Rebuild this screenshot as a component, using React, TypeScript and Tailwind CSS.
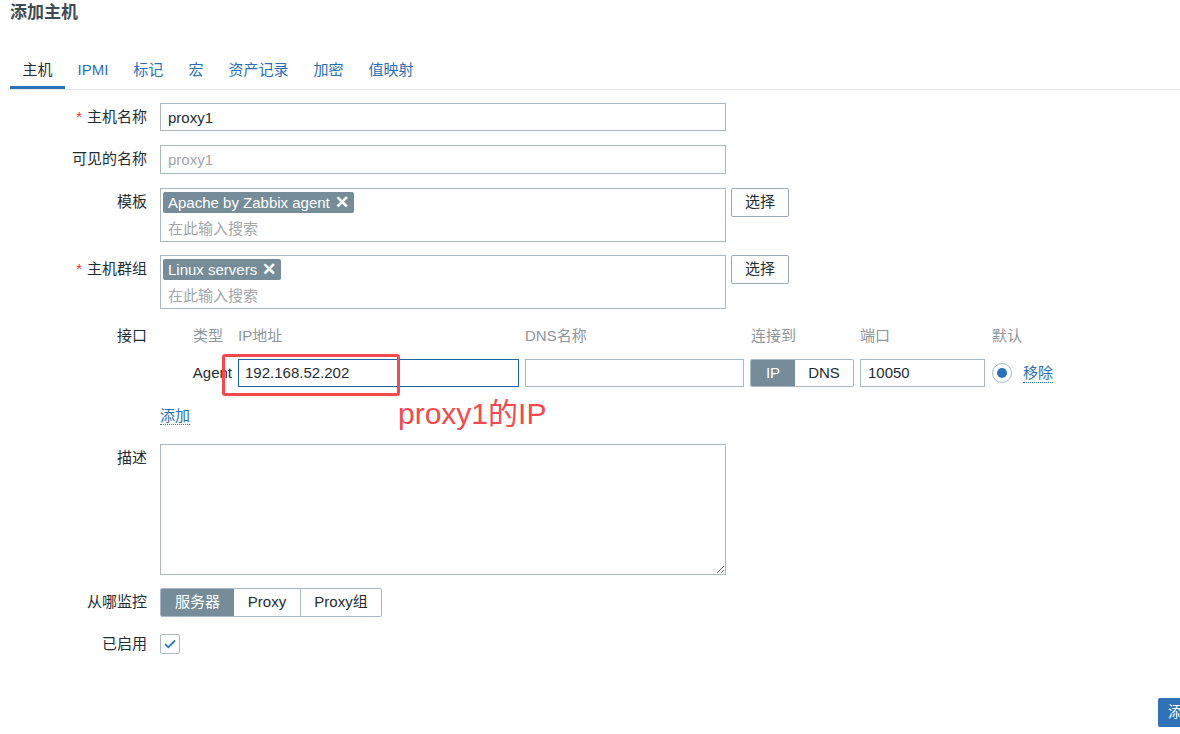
import React from "react";

const font = { fontFamily: '"Liberation Sans", "Noto Sans CJK SC", sans-serif' };

const tabs = ["主机", "IPMI", "标记", "宏", "资产记录", "加密", "值映射"];

function Label({ text, required }: { text: string; required?: boolean }) {
  return (
    <div className="w-[147px] shrink-0 pr-0 text-right leading-[28px] text-[#1f2c33]">
      {required && <span className="mr-[5px] text-[#e33734]">*</span>}
      {text}
    </div>
  );
}

function Tag({ text }: { text: string }) {
  return (
    <span className="inline-flex h-[21px] items-center rounded-[2px] bg-[#768d99] pl-[5px] pr-[5px] leading-[21px] text-white">
      {text}
      <span className="ml-[5px] text-[17px] font-bold leading-[21px]">✕</span>
    </span>
  );
}

function MultiSelect({ tag }: { tag: string }) {
  return (
    <div className="flex items-start">
      <div className="h-[54px] w-[566px] border border-[#a9b8c2] bg-white pl-[2px] pt-[3px]">
        <Tag text={tag} />
        <div className="mt-[2px] pl-[5px] leading-[24px] text-[#a2a6a9]">在此输入搜索</div>
      </div>
      <button className="ml-[5px] h-[29px] w-[58px] rounded-[2px] border border-[#98a9b3] bg-white text-[#1f2c33]">
        选择
      </button>
    </div>
  );
}

export default function App() {
  return (
    <div
      className="relative h-[734px] w-[1180px] overflow-hidden bg-white text-[15px] text-[#1f2c33]"
      style={font}
    >
      <div className="pl-[10px] text-[17px] font-bold leading-[26px] text-[#3f4b53]">添加主机</div>

      <div className="ml-[10px] mt-[26px] flex border-b border-[#e6eaec]">
        {tabs.map((t, i) => (
          <div
            key={t}
            className={`flex h-[37px] items-center border-b-[3px] px-[12.5px] pt-[3px] ${
              i === 0
                ? "border-[#2b72bb] text-[#1f2c33]"
                : "border-transparent text-[#2b6fb3]"
            }`}
          >
            {t}
          </div>
        ))}
      </div>

      <div className="mt-[13px] flex flex-col">
        <div className="flex">
          <Label text="主机名称" required />
          <input
            readOnly
            value="proxy1"
            className="ml-[13px] h-[28px] w-[566px] border border-[#a9b8c2] px-[7px] text-[15px] text-[#1f2c33] outline-none"
            style={font}
          />
        </div>

        <div className="mt-[14px] flex">
          <Label text="可见的名称" />
          <div className="ml-[13px] h-[29px] w-[566px] border border-[#a9b8c2] px-[7px] leading-[27px] text-[#a2a6a9]">
            proxy1
          </div>
        </div>

        <div className="mt-[14px] flex">
          <Label text="模板" />
          <div className="ml-[13px]">
            <MultiSelect tag="Apache by Zabbix agent" />
          </div>
        </div>

        <div className="mt-[13px] flex">
          <Label text="主机群组" required />
          <div className="ml-[13px]">
            <MultiSelect tag="Linux servers" />
          </div>
        </div>

        <div className="mt-[17px] flex">
          <div className="w-[147px] shrink-0 text-right leading-[20px]">接口</div>
          <div className="ml-[13px]">
            <div className="grid grid-cols-[78px_287px_225px_110px_132px_auto] leading-[20px] text-[#8c959b]">
              <div className="pl-[33px]">类型</div>
              <div>IP地址</div>
              <div>DNS名称</div>
              <div className="pl-[1px]">连接到</div>
              <div>端口</div>
              <div>默认</div>
            </div>
            <div className="mt-[13px] grid grid-cols-[78px_287px_225px_110px_132px_auto] items-center">
              <div className="pr-[6px] text-right">Agent</div>
              <div className="h-[28px] w-[281px] border border-[#1f65a6] px-[6px] leading-[26px]">
                192.168.52.202
              </div>
              <div className="h-[28px] w-[219px] border border-[#a9b8c2]" />
              <div className="flex h-[28px] w-[104px] overflow-hidden rounded-[2px] border border-[#a9b8c2]">
                <div className="flex w-[44px] items-center justify-center bg-[#768d99] text-white">IP</div>
                <div className="flex flex-1 items-center justify-center">DNS</div>
              </div>
              <div className="h-[28px] w-[125px] border border-[#a9b8c2] px-[7px] leading-[26px]">10050</div>
              <div className="flex items-center">
                <span className="flex h-[20px] w-[20px] items-center justify-center rounded-full border border-[#acbbc2]">
                  <span className="h-[10px] w-[10px] rounded-full bg-[#2b72bb]" />
                </span>
                <span className="ml-[11px] border-b border-dotted border-[#2b6fb3] leading-[18px] text-[#2b6fb3]">
                  移除
                </span>
              </div>
            </div>
            <div className="mt-[19px] leading-[20px]">
              <span className="border-b border-dotted border-[#2b6fb3] text-[#2b6fb3]">添加</span>
            </div>
          </div>
        </div>

        <div className="mt-[18px] flex">
          <div className="w-[147px] shrink-0 text-right leading-[28px]">描述</div>
          <textarea
            readOnly
            className="ml-[13px] h-[131px] w-[566px] border border-[#a9b8c2] outline-none"
          />
        </div>

        <div className="mt-[13px] flex">
          <Label text="从哪监控" />
          <div className="ml-[13px] flex h-[29px] overflow-hidden rounded-[2px] border border-[#a9b8c2]">
            <div className="flex w-[73px] items-center justify-center bg-[#768d99] text-white">服务器</div>
            <div className="flex w-[67px] items-center justify-center border-r border-[#a9b8c2]">Proxy</div>
            <div className="flex w-[80px] items-center justify-center">Proxy组</div>
          </div>
        </div>

        <div className="mt-[17px] flex items-center">
          <div className="w-[147px] shrink-0 text-right leading-[20px]">已启用</div>
          <div className="ml-[13px] flex h-[20px] w-[20px] items-center justify-center rounded-[2px] border border-[#acbbc2]">
            <svg width="12" height="10" viewBox="0 0 12 10" fill="none">
              <path d="M1 5.2 L4.3 8.3 L11 1.5" stroke="#2b72bb" strokeWidth="1.8" />
            </svg>
          </div>
        </div>

        <div className="mt-[44px] flex pl-[1158px]">
          <button className="h-[29px] shrink-0 rounded-[2px] bg-[#2f72b8] px-[10px] text-white">添加</button>
        </div>
      </div>

      {/* annotation */}
      <div className="absolute left-[222px] top-[354px] h-[42px] w-[178px] rounded-[3px] border-[3px] border-[#f24a4f]" />
      <div className="absolute left-[398px] top-[396px] text-[30px] leading-[36px] text-[#f24a4f]">proxy1的IP</div>
    </div>
  );
}
